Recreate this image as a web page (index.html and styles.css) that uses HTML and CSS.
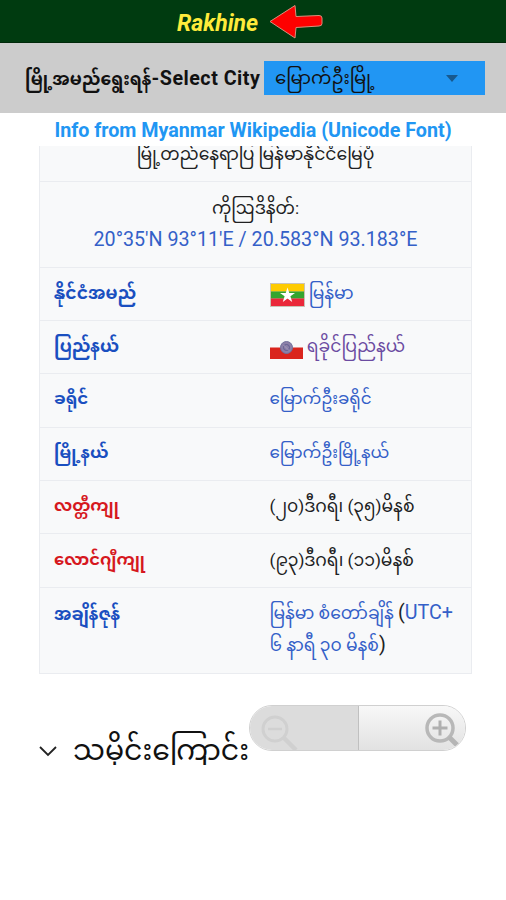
FILE: index.html
```html
<!DOCTYPE html>
<html lang="my">
<head>
<meta charset="UTF-8">
<meta name="viewport" content="width=device-width, initial-scale=1.0">
<title>Rakhine</title>
<link rel="stylesheet" href="styles.css">
</head>
<body>

<header class="title-bar">
  <h1>Rakhine</h1>
  <svg class="arrow" width="56" height="36" viewBox="0 0 56 36">
    <path d="M2 17.5 L27 1.5 L28 12.5 L51 11.5 Q54 11.500 54 14 V19.500 Q54 22 51 22 L28 23.500 L27 34 Z" fill="#fe0000" stroke="#d8917c" stroke-width="1" stroke-linejoin="round"/>
  </svg>
</header>

<div class="city-bar">
  <span class="city-label">မြို့အမည်ရွေးရန်<span class="latin">-Select City</span></span>
  <div class="city-select">
    <span>မြောက်ဦးမြို့</span>
    <i class="caret"></i>
  </div>
</div>

<h2 class="source">Info from Myanmar Wikipedia (Unicode Font)</h2>

<div class="page">
  <table class="infobox">
    <tr class="map-row">
      <td colspan="2"><div class="map-caption">မြို့တည်နေရာပြ မြန်မာနိုင်ငံမြေပုံ</div></td>
    </tr>
    <tr class="coords">
      <td colspan="2">ကိုဩဒိနိတ်:<br><a class="latin">20°35′N 93°11′E / 20.583°N 93.183°E</a></td>
    </tr>
    <tr>
      <th>နိုင်ငံအမည်</th>
      <td>
        <svg class="flag" width="35" height="24" viewBox="0 0 35 24">
          <rect width="35" height="24" fill="#c9c3b6"/>
          <rect x="1" y="1" width="33" height="7.500" fill="#fecb00"/>
          <rect x="1" y="8.500" width="33" height="7" fill="#34a52f"/>
          <rect x="1" y="15.500" width="33" height="7.500" fill="#ea2839"/>
          <path d="M17.5 4.500 L19.300 10 H25 L20.400 13.300 L22.200 19 L17.500 15.500 L12.800 19 L14.600 13.300 L10 10 H15.700 Z" fill="#fff"/>
        </svg>
        <a>မြန်မာ</a>
      </td>
    </tr>
    <tr>
      <th>ပြည်နယ်</th>
      <td>
        <svg class="flag" width="33" height="24" viewBox="0 0 33 24">
          <rect y="11.500" width="33" height="11.500" fill="#da251d"/>
          <circle cx="16.500" cy="11.500" r="6" fill="#8c80a8" stroke="#72719d"/>
          <circle cx="16.500" cy="11.500" r="3" fill="none" stroke="#625f91"/>
          <path d="M13.500 9 L19 14.500" stroke="#a49abb"/>
        </svg>
        <a class="visited">ရခိုင်ပြည်နယ်</a>
      </td>
    </tr>
    <tr class="narrow">
      <th>ခရိုင်</th>
      <td><a>မြောက်ဦးခရိုင်</a></td>
    </tr>
    <tr class="narrow">
      <th>မြို့နယ်</th>
      <td><a>မြောက်ဦးမြို့နယ်</a></td>
    </tr>
    <tr>
      <th class="missing">လတ္တီကျု</th>
      <td>(၂၀)ဒီဂရီ၊ (၃၅)မိနစ်</td>
    </tr>
    <tr>
      <th class="missing">လောင်ဂျီကျု</th>
      <td>(၉၃)ဒီဂရီ၊ (၁၁)မိနစ်</td>
    </tr>
    <tr class="zone">
      <th>အချိန်ဇုန်</th>
      <td><a>မြန်မာ စံတော်ချိန်</a> <span class="latin">(<a>UTC+</a></span><br><a>၆ နာရီ ၃၀ မိနစ်</a><span class="latin">)</span></td>
    </tr>
  </table>

  <div class="section">
    <svg class="chevron" width="18" height="12" viewBox="0 0 18 12">
      <path d="M1 2 L9 10 L17 2" fill="none" stroke="#222" stroke-width="1.800"/>
    </svg>
    <h3>သမိုင်းကြောင်း</h3>
    <div class="zoom">
      <div class="zoom-out">
        <svg width="44" height="40" viewBox="0 0 44 40">
          <circle cx="17" cy="18" r="12" fill="none" stroke="#d0d0d0" stroke-width="3"/>
          <path d="M10 18 H24" stroke="#d0d0d0" stroke-width="2.500"/>
          <path d="M26 27 L38 39" stroke="#d0d0d0" stroke-width="4.500"/>
        </svg>
      </div>
      <div class="zoom-in">
        <svg width="40" height="40" viewBox="0 0 40 40">
          <circle cx="17" cy="18" r="13" fill="none" stroke="#b8b8b8" stroke-width="3.500"/>
          <path d="M9.500 18 H24.500 M17 10.500 V25.500" stroke="#b0b0b0" stroke-width="3"/>
          <path d="M26 27 L35 36" stroke="#b5b5b5" stroke-width="5"/>
        </svg>
      </div>
    </div>
  </div>
</div>

</body>
</html>
```
FILE: styles.css
```css
* {
  box-sizing: border-box;
}

body {
  margin: 0;
  min-height: 100vh;
  background-color: #fff;
  color: #202122;
  font-family: Roboto, "Noto Sans Myanmar", "Noto Sans", sans-serif;
  font-size: 17.2px;
}

h1, h2, h3 {
  margin: 0;
}

.latin {
  font-size: 19.7px;
}

.title-bar {
  display: flex;
  align-items: flex-start;
  height: 43px;
  padding: 4px 0 0 177px;
  background-color: #003b10;
  border-bottom: 1px solid #00290a;
}

.title-bar h1 {
  width: 91px;
  padding-top: 6px;
  color: #ffeb3b;
  font-size: 23px;
  font-style: italic;
  line-height: 28px;
}

.city-bar {
  display: flex;
  align-items: center;
  height: 70px;
  padding: 0 0 0 25px;
  background-color: #ccc;
  color: #111;
  line-height: 34px;
  white-space: nowrap;
}

.city-label {
  width: 239px;
  padding-top: 2px;
  font-weight: bold;
}

.city-label .latin {
  letter-spacing: 0.5px;
}

.city-select {
  display: flex;
  justify-content: space-between;
  align-items: center;
  width: 221px;
  height: 34px;
  padding: 0 27px 0 11px;
  background-color: #2196f3;
  font-size: 18.2px;
}

.caret {
  border: 6px solid transparent;
  border-top: 7px solid #17598f;
  border-bottom: 0;
}

.source {
  height: 33px;
  color: #2196f3;
  font-size: 19.7px;
  line-height: 35px;
  text-align: center;
  white-space: nowrap;
}

.page {
  padding: 0 35px 0 39px;
}

.infobox {
  width: 433px;
  border: 1px solid #eaecf0;
  border-top: 0;
  border-collapse: collapse;
  table-layout: fixed;
  background-color: #f8f9fa;
}

.infobox tr {
  height: 53.4px;
  border-bottom: 1px solid #eaecf0;
}

.infobox th,
.infobox td {
  padding: 0 0 2px 14px;
  line-height: 32px;
  text-align: left;
  white-space: nowrap;
}

.infobox th {
  color: #1a4fc0;
}

.infobox .missing {
  color: #d6181e;
  font-size: 16.4px;
}

.infobox .narrow {
  font-size: 16.7px;
}

.infobox a {
  color: #3460c8;
}

.infobox .visited {
  color: #6b4ba1;
}

.infobox .map-row {
  height: 35px;
}

.infobox .map-row td,
.infobox .coords td {
  padding: 0;
  text-align: center;
}

.map-caption {
  height: 34px;
  line-height: 16px;
  overflow: hidden;
}

.infobox .coords {
  height: 86px;
}

.infobox .zone {
  height: 86px;
}

.infobox .zone th {
  padding-top: 10px;
  vertical-align: top;
}

.flag {
  vertical-align: -8px;
}

.section {
  display: flex;
  align-items: flex-start;
  height: 110px;
  padding-top: 31px;
}

.chevron {
  margin-top: 40px;
}

.section h3 {
  width: 177px;
  height: 34px;
  margin: 26px 0 0 16px;
  color: #111;
  font-size: 28.3px;
  font-weight: normal;
  line-height: 40px;
  white-space: nowrap;
  overflow: hidden;
}

.zoom {
  display: flex;
  flex: none;
  width: 217px;
  height: 46px;
  margin-left: -1px;
  border: 1px solid #d0d0d0;
  border-radius: 23px;
  overflow: hidden;
}

.zoom-out {
  width: 109px;
  padding: 5px 0 0 8px;
  background-color: #dcdcdc;
  border-right: 1px solid #c0c0c0;
}

.zoom-in {
  flex: 1;
  padding: 4px 0 0 64px;
  background: linear-gradient(#f8f8f8, #e2e2e2);
}
```
